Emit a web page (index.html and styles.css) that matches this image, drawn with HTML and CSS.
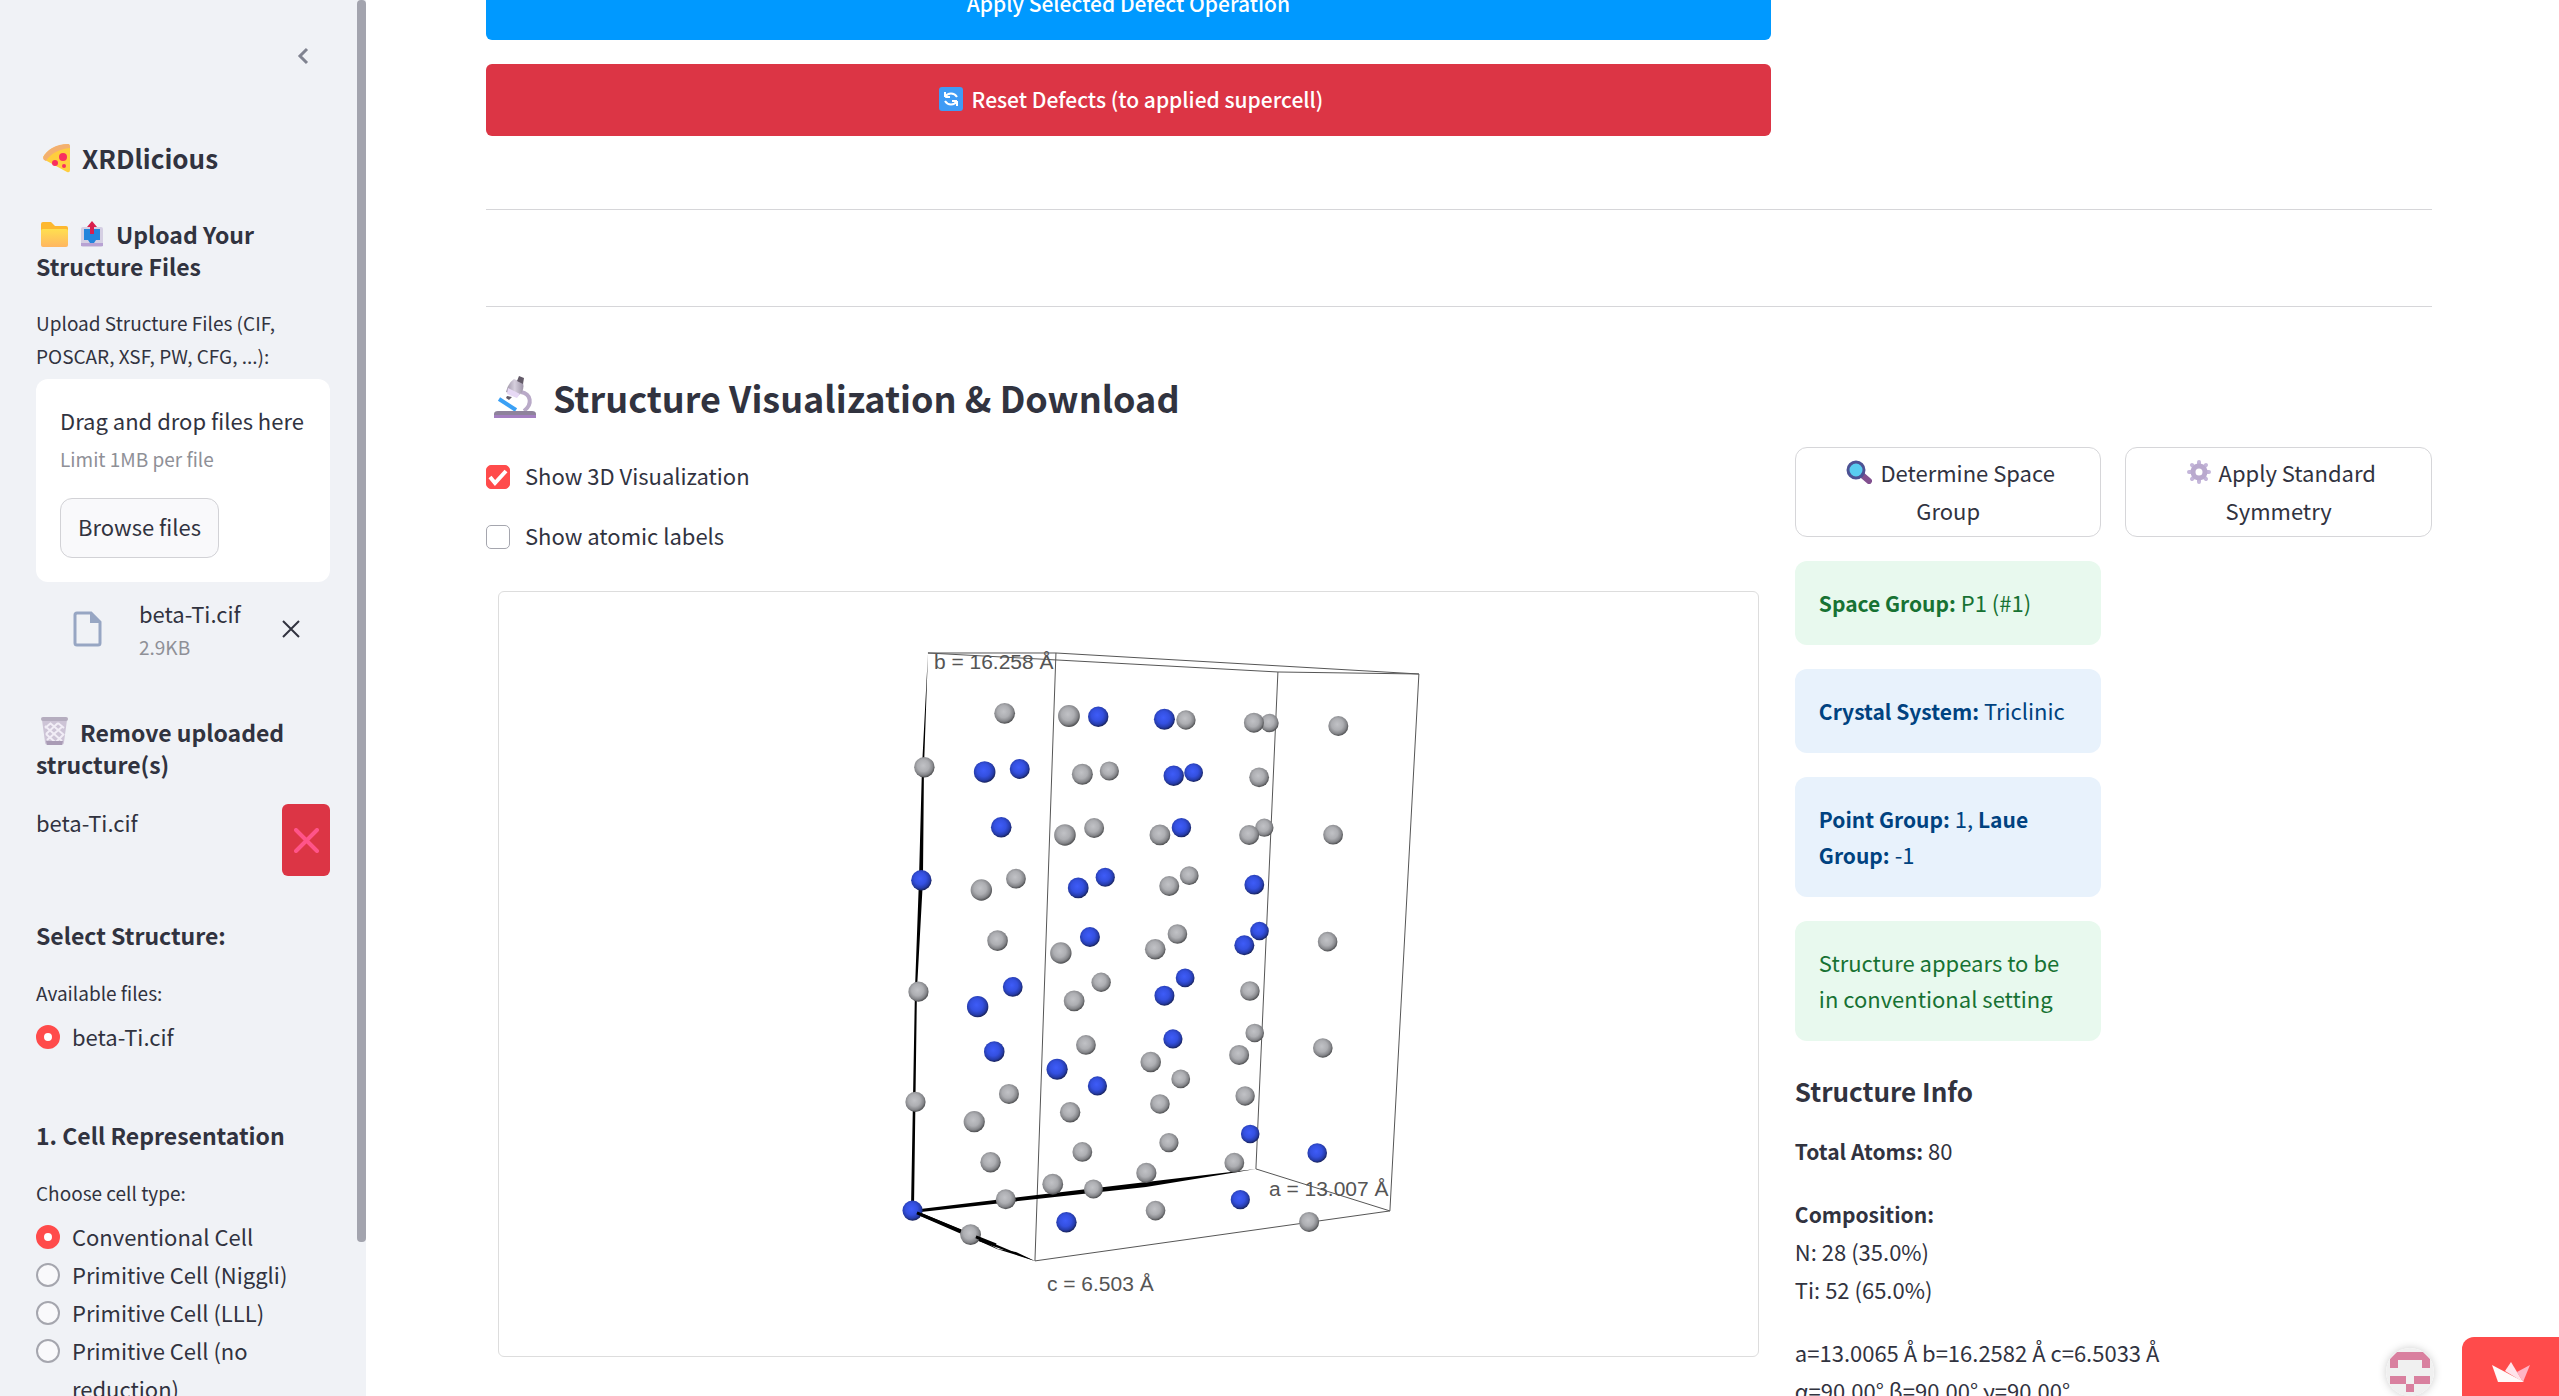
FILE: index.html
```html
<!DOCTYPE html>
<html lang="en">
<head>
<meta charset="utf-8">
<title>XRDlicious</title>
<link rel="stylesheet" href="styles.css">
</head>
<body>
<aside class="sidebar">
  <div class="sidebar-scroll">
    <header class="sidebar-head">
      <button class="icon-button" aria-label="Collapse sidebar"><svg width="12" height="18" viewBox="0 0 12 18"><path d="M10 2 3 9l7 7" fill="none" stroke="#808390" stroke-width="3"/></svg></button>
    </header>
    <h1 class="app-title">
      <svg class="emoji" width="28" height="30" viewBox="0 0 28 30"><path d="M1 14C5 7 14 2 26 1q2 0 2 3v23q0 3-3 2L3 17z" fill="#ffce3e"/><path d="M1 15C4 7 14 1 26 1q2 0 2 4C17 6 8 11 4 18q-3-1-3-3z" fill="#f3b070"/><circle cx="21" cy="14" r="4" fill="#f92f60"/><circle cx="13" cy="20" r="3" fill="#f92f60"/><circle cx="22" cy="23" r="2" fill="#f92f60"/></svg>
      XRDlicious</h1>

    <h2 class="side-heading"><svg class="emoji" width="27" height="25" viewBox="0 0 27 25"><defs><linearGradient id="folder" x2="0" y2="1"><stop stop-color="#ffdf4f"/><stop offset="1" stop-color="#ffb661"/></linearGradient></defs><path d="M0 2q0-2 2-2h8l4 4h11q2 0 2 2v4H0z" fill="#fdb82f"/><rect y="7" width="27" height="18" rx="2" fill="url(#folder)"/></svg><svg class="emoji emoji-outbox" width="22" height="26" viewBox="0 0 22 26"><path d="M0 8q0-2 2-2h18q2 0 2 2v16q0 2-2 2H2q-2 0-2-2z" fill="#d5cfe3"/><path d="M3 8h16v11h-4l-2 3H9l-2-3H3z" fill="#2385dc"/><path d="M0 22h22v3H0z" fill="#b8a2d3"/><path d="M9 13V6H6l5-6 5 6h-3v7z" fill="#d91f4d"/></svg>Upload Your Structure Files</h2>
    <label class="field-label" for="files">Upload Structure Files (CIF, POSCAR, XSF, PW, CFG, ...):</label>
    <section class="dropzone">
      <div class="drop-title">Drag and drop files here</div>
      <div class="drop-limit">Limit 1MB per file</div>
      <button class="browse" id="files">Browse files</button>
    </section>
    <div class="upload">
      <svg width="29" height="36" viewBox="0 0 29 36"><path d="M4 2h14l9 9v21q0 2-2 2H4q-2 0-2-2V4q0-2 2-2z" fill="none" stroke="#97a6c3" stroke-width="3"/><path d="M17 2v10h11z" fill="#97a6c3"/></svg>
      <div class="upload-text"><div class="upload-name">beta-Ti.cif</div><div class="upload-size">2.9KB</div></div>
      <button class="icon-button" aria-label="Remove file"><svg width="18" height="18" viewBox="0 0 18 18"><path d="m1 1 16 16M17 1 1 17" stroke="#31333f" stroke-width="2"/></svg></button>
    </div>

    <h2 class="side-heading heading-remove"><svg class="emoji" width="27" height="28" viewBox="0 0 27 28"><path d="M1 3h25l-3 22q0 3-3 3H7q-3 0-3-3z" fill="#cdc4d6"/><path d="m4 9 17 15M5 17l9 8M9 6l14 12M17 6l6 5M22 9 6 23M23 17l-8 8M17 6 5 17M10 6 4 11" stroke="#f1edf6" stroke-width="2"/><path d="M5 24h17l-1 4H6z" fill="#a99bb5"/><rect width="27" height="4" rx="2" fill="#b5adbf"/></svg>Remove uploaded structure(s)</h2>
    <div class="remove-row">
      <span>beta-Ti.cif</span>
      <button class="remove" aria-label="Remove beta-Ti.cif"><svg width="25" height="25" viewBox="0 0 25 25"><path d="m2 2 21 21M23 2 2 23" stroke="#ff5489" stroke-width="4" stroke-linecap="round"/></svg></button>
    </div>

    <h2 class="side-heading heading-select">Select Structure:</h2>
    <fieldset class="radios">
      <legend class="field-label">Available files:</legend>
      <label class="radio"><input type="radio" name="file" checked><span>beta-Ti.cif</span></label>
    </fieldset>

    <h2 class="side-heading heading-cell">1. Cell Representation</h2>
    <fieldset class="radios">
      <legend class="field-label">Choose cell type:</legend>
      <label class="radio"><input type="radio" name="cell" checked><span>Conventional Cell</span></label>
      <label class="radio"><input type="radio" name="cell"><span>Primitive Cell (Niggli)</span></label>
      <label class="radio"><input type="radio" name="cell"><span>Primitive Cell (LLL)</span></label>
      <label class="radio"><input type="radio" name="cell"><span>Primitive Cell (no reduction)</span></label>
    </fieldset>
  </div>
  <div class="thumb"></div>
</aside>

<main class="main">
  <div class="columns">
    <div class="actions">
      <button class="wide wide-blue">Apply Selected Defect Operation</button>
      <button class="wide wide-red"><svg width="24" height="24" viewBox="0 0 24 24"><rect width="24" height="24" rx="3" fill="#3f9bf5"/><path d="M6 10V5m0 5h5M6 10a7 7 0 0 1 12 0M18 14v5m0-5h-5m5 0a7 7 0 0 1-12 0" fill="none" stroke="#fff" stroke-width="2"/></svg>Reset Defects (to applied supercell)</button>
    </div>
  </div>
  <hr class="rule rule-first">
  <hr class="rule">
  <h2 class="page-heading"><svg width="42" height="42" viewBox="0 0 42 42"><defs><linearGradient id="tube"><stop stop-color="#9c93a6"/><stop offset=".5" stop-color="#d6cfdd"/><stop offset="1" stop-color="#9e95a8"/></linearGradient></defs><path d="M27 16c10 2 12 12 3 19" fill="none" stroke="#b9aac8" stroke-width="4"/><path d="m5 23 17 11" stroke="#3aa0f5" stroke-width="4"/><path d="m20 3 9 4q2 8-5 13l-12-4Q14 7 20 3z" fill="url(#tube)"/><path d="m14 12 12 6-3 4-10-4z" fill="#e7d9f5"/><path d="m25 0 5 2-1 6-6-3zM13 20l5 1-3 3-3-2z" fill="#635a68"/><path d="M0 38q0-3 4-3h34q4 0 4 3v4H0z" fill="#8e829b"/><path d="M0 39h42v3H0z" fill="#a37fc0"/></svg>Structure Visualization &amp; Download</h2>

  <div class="columns">
    <section class="visual">
      <label class="check"><input type="checkbox" checked><span>Show 3D Visualization</span></label>
      <label class="check"><input type="checkbox"><span>Show atomic labels</span></label>
      <div class="viewer">
        <svg class="crystal" viewBox="499 593 1259 764" role="img" aria-label="Unit cell">
          <defs>
            <radialGradient id="gray" cx=".45" cy=".42" r=".58"><stop stop-color="#c1c2c6"/><stop offset=".5" stop-color="#adaeb2"/><stop offset=".8" stop-color="#85868a"/><stop offset="1" stop-color="#4d4e50"/></radialGradient>
            <radialGradient id="blue" cx=".45" cy=".42" r=".58"><stop stop-color="#3e5cf8"/><stop offset=".5" stop-color="#3450e0"/><stop offset=".8" stop-color="#263cab"/><stop offset="1" stop-color="#18225a"/></radialGradient>
          </defs>
          <g class="cell-edges">
            <path d="M928 654h128l363 21-141-2zM1056 654l-21 608 355-50 29-537M1278 673l-22 497 134 42"/>
          </g>
          <path d="m928 654-4 115-1 112-6 110-3 221h-3l4-221 4-110 3-112zM912 1211l344-41-110 18-234 26zM912 1210l123 52-62-22-62-27z"/>
          <path d="m970 1238 6 0 22 12 18 3 19 9-38-12z"/>
          <g fill="url(#gray)">
            <circle cx="1269.6" cy="724" r="9.2"/><circle cx="1004.7" cy="714.3" r="10.4"/><circle cx="1069" cy="717" r="10.9"/><circle cx="1186" cy="721" r="9.7"/><circle cx="1254" cy="723.7" r="10"/><circle cx="1338.4" cy="727" r="10"/>
            <circle cx="924.4" cy="768.3" r="10.2"/><circle cx="1082.4" cy="775.3" r="10.5"/><circle cx="1109.4" cy="772" r="9.6"/><circle cx="1259.2" cy="778.3" r="9.9"/>
            <circle cx="1065" cy="836" r="10.8"/><circle cx="1094.2" cy="829" r="10"/><circle cx="1160" cy="836" r="10.4"/><circle cx="1264.4" cy="828.7" r="9.2"/><circle cx="1249.2" cy="836" r="10"/><circle cx="1333.2" cy="835.7" r="9.9"/>
            <circle cx="981.4" cy="891" r="10.7"/><circle cx="1016" cy="879.7" r="9.9"/><circle cx="1169.3" cy="887" r="10"/><circle cx="1189.3" cy="876.7" r="9.4"/>
            <circle cx="997.6" cy="941.7" r="10.3"/><circle cx="1060.9" cy="954" r="10.7"/><circle cx="1155.3" cy="950.3" r="10.3"/><circle cx="1177.5" cy="935" r="9.8"/><circle cx="1327.7" cy="942.7" r="9.8"/>
            <circle cx="918.5" cy="992.7" r="10.1"/><circle cx="1074.2" cy="1002" r="10.4"/><circle cx="1101.2" cy="983.3" r="9.7"/><circle cx="1250" cy="992" r="9.8"/>
            <circle cx="1086" cy="1046" r="9.9"/><circle cx="1150.8" cy="1063" r="10.3"/><circle cx="1180.8" cy="1080" r="9.4"/><circle cx="1239.2" cy="1056" r="10"/><circle cx="1254.8" cy="1034" r="9.3"/><circle cx="1322.9" cy="1049" r="9.8"/>
            <circle cx="915.5" cy="1103" r="10.1"/><circle cx="974.3" cy="1122.7" r="10.6"/><circle cx="1009" cy="1095" r="10"/><circle cx="1070.2" cy="1113.3" r="10.2"/><circle cx="1160" cy="1105" r="9.8"/><circle cx="1245.2" cy="1097" r="9.7"/>
            <circle cx="990.6" cy="1163.3" r="10.2"/><circle cx="1082.4" cy="1153" r="9.9"/><circle cx="1169" cy="1143.7" r="9.6"/><circle cx="1234.4" cy="1163.7" r="9.9"/><circle cx="1146.4" cy="1174" r="10.1"/>
            <circle cx="1052.8" cy="1185.3" r="10.4"/><circle cx="1093.5" cy="1190" r="9.5"/><circle cx="1005.8" cy="1200.3" r="10"/><circle cx="1155.6" cy="1211.7" r="9.8"/><circle cx="970.6" cy="1235.7" r="10.4"/><circle cx="1309.2" cy="1223" r="10"/>
          </g>
          <g fill="url(#blue)">
            <circle cx="1098.3" cy="717.7" r="10.2"/><circle cx="1164.5" cy="720.3" r="10.5"/>
            <circle cx="984.7" cy="773" r="10.8"/><circle cx="1019.8" cy="770" r="10"/><circle cx="1193.7" cy="773.7" r="9.4"/><circle cx="1173.8" cy="776.7" r="10.2"/>
            <circle cx="1001.3" cy="828.3" r="10.3"/><circle cx="1181.5" cy="828.7" r="9.7"/>
            <circle cx="921.4" cy="881.3" r="10.2"/><circle cx="1078.3" cy="889" r="10.4"/><circle cx="1105.3" cy="878.3" r="9.6"/><circle cx="1254.4" cy="885.7" r="9.9"/>
            <circle cx="1090" cy="938" r="10"/><circle cx="1259.6" cy="932" r="9.3"/><circle cx="1244.4" cy="946.3" r="10"/>
            <circle cx="977.7" cy="1007.7" r="10.7"/><circle cx="1012.8" cy="988" r="9.9"/><circle cx="1164.5" cy="996.7" r="10"/><circle cx="1185.2" cy="979" r="9.4"/>
            <circle cx="994.3" cy="1052.7" r="10.3"/><circle cx="1057.2" cy="1070.3" r="10.6"/><circle cx="1097.5" cy="1087" r="9.6"/><circle cx="1173" cy="1040" r="9.6"/>
            <circle cx="1250.3" cy="1135" r="9.3"/><circle cx="1317.3" cy="1154" r="9.8"/><circle cx="1240.4" cy="1200.7" r="9.6"/><circle cx="912.6" cy="1211.7" r="10.1"/><circle cx="1066.5" cy="1223.3" r="10.2"/>
          </g>
          <path d="m917 1214 44 18M976 1238l20 8" stroke="#000" stroke-width="3"/>
          <g class="axis-label"><text x="934" y="670">b = 16.258 Å</text><text x="1269" y="1197">a = 13.007 Å</text><text x="1047" y="1292">c = 6.503 Å</text></g>
        </svg>
      </div>
    </section>

    <section class="info">
      <div class="info-grid">
        <div class="stack">
          <button class="tool"><svg class="tool-icon" width="26" height="24" viewBox="0 0 26 24"><path d="m16 15 7 6" stroke="#82508f" stroke-width="6" stroke-linecap="round"/><circle cx="10" cy="10" r="8" fill="#59cdf0" stroke="#4d5294" stroke-width="3"/></svg>Determine Space Group</button>
          <p class="alert alert-green"><strong>Space Group:</strong> P1 (#1)</p>
          <p class="alert alert-blue"><strong>Crystal System:</strong> Triclinic</p>
          <p class="alert alert-blue"><strong>Point Group:</strong> 1, <strong>Laue Group:</strong> -1</p>
          <p class="alert alert-green">Structure appears to be in conventional setting</p>
        </div>
        <div class="stack">
          <button class="tool"><svg class="tool-icon" width="24" height="24" viewBox="0 0 24 24"><path d="M12 2v20M2 12h20M5 5l14 14M19 5 5 19" stroke="#c4b6da" stroke-width="4" stroke-linecap="round"/><circle cx="12" cy="12" r="6" fill="#fff" stroke="#b9a9ce" stroke-width="5"/></svg>Apply Standard Symmetry</button>
        </div>
      </div>
      <h3 class="info-title">Structure Info</h3>
      <p class="info-text"><strong>Total Atoms:</strong> 80</p>
      <p class="info-text"><strong>Composition:</strong><br>N: 28 (35.0%)<br>Ti: 52 (65.0%)</p>
      <p class="info-text">a=13.0065 Å b=16.2582 Å c=6.5033 Å<br>α=90.00° β=90.00° γ=90.00°</p>
    </section>
  </div>
</main>

<div class="badges">
  <svg class="avatar" width="48" height="48" viewBox="0 0 48 48"><circle cx="24" cy="24" r="24" fill="#f0f0f0"/><path d="M4 20v-9l7-7h26l7 7v9h-8v-8H12v8zM4 28h16v8h8v-8h16v8H28v8h-8v-8H4z" fill="#d9809f"/></svg>
  <a class="hosted" href="#" aria-label="Hosted with Streamlit"><svg width="40" height="22" viewBox="0 0 40 22"><path d="m39 4-7 17-6-10z" fill="#ffb3c4"/><path d="m20 1 12 20-18-11z" fill="#ffe3ea"/><path d="m1 4 32 17H7z" fill="#fffafa"/></svg></a>
</div>
</body>
</html>
```
FILE: styles.css
```css
* { box-sizing: border-box; }
body {
  margin: 0;
  display: flex;
  height: 100vh;
  overflow: hidden;
  background: #fff;
  color: #31333f;
  font: 400 22px/38px "Noto Sans CJK SC", "Noto Sans", sans-serif;
}
h1, h2, h3, p, fieldset { margin: 0; padding: 0; border: 0; }
legend { padding: 0; }
button { font: inherit; color: inherit; cursor: pointer; }
strong, h1, h2, h3 { font-weight: 600; }
strong { font-size: 21px; line-height: 1; }

/* Sidebar */
.sidebar { position: relative; flex: 0 0 366px; background: #f0f2f6; overflow: hidden; }
.sidebar-scroll { padding: 0 36px; }
.thumb { position: absolute; top: 0; right: 0; width: 9px; height: 89%; border-radius: 4px; background: #a3a4ae; }
.sidebar-head { display: flex; justify-content: flex-end; align-items: center; height: 112px; padding-right: 15px; }
.icon-button { display: flex; padding: 6px; border: 0; background: none; }
.app-title { display: flex; align-items: center; margin-top: 28px; font-size: 26px; line-height: 36px; gap: 6px; }
.emoji { margin: 0 6px; vertical-align: -3px; }
.side-heading { margin-top: 42px; font-size: 23px; line-height: 32px; }
.side-heading .emoji { margin: 0 12px 0 5px; }
.side-heading .emoji-outbox { margin: 0 13px 0 1px; }
.field-label { display: block; padding-top: 24px; font-size: 19px; line-height: 33px; }
.dropzone { margin-top: 7px; padding: 22px 24px 24px; border-radius: 12px; background: #fff; }
.drop-title { white-space: nowrap; }
.drop-limit { margin: 3px 0 22px; font-size: 19px; line-height: 34px; color: #8f9097; }
.browse { display: block; height: 60px; padding: 0 17px 4px; border: 1px solid #d2d2d6; border-radius: 12px; background: #f9f9fb; }
.upload { display: flex; align-items: center; margin-top: 13px; padding-left: 37px; padding-right: 24px; }
.upload-text { flex: 1; padding-left: 37px; }
.upload-name { line-height: 36px; }
.upload-size { font-size: 19px; line-height: 32px; color: #8f9097; }
.heading-remove { margin-top: 53px; }
.remove-row { display: flex; justify-content: space-between; align-items: flex-start; margin-top: 24px; }
.remove-row span { line-height: 36px; }
.remove { display: flex; align-items: center; justify-content: center; width: 48px; height: 72px; padding: 0; border: 0; border-radius: 6px; background: #dc3545; }
.heading-select { margin-top: 43px; }
.heading-cell { margin-top: 64px; }
.radios { min-width: 0; }
.radios .field-label { padding-top: 25px; margin-bottom: 8px; }
.radio { display: flex; align-items: flex-start; gap: 12px; }
.radio input { flex: none; appearance: none; width: 24px; height: 24px; margin: 8px 0 0; border: 2px solid #a5a6ae; border-radius: 50%; background: #f9f9fb; }
.radio input:checked { border: 8px solid #ff4b4b; background: #fff; }

/* Main area */
.main { flex: 1; min-width: 0; padding: 0 127px 0 120px; }
.columns { display: grid; grid-template-columns: 121fr 60fr; gap: 24px; }
.actions { display: grid; gap: 24px; margin-top: -32px; }
.wide { display: flex; align-items: center; justify-content: center; gap: 9px; height: 72px; padding: 0 0 3px; border: 0; border-radius: 6px; color: #fff; font-size: 21px; font-weight: 500; }
.wide-blue { background: #0099ff; }
.wide-red { background: #dc3545; }
.wide svg { margin-left: 5px; }
.rule { height: 1px; margin: 96px 0 0; border: 0; background: #d6d6d9; }
.rule-first { margin-top: 73px; }
.page-heading { display: flex; align-items: center; gap: 17px; margin: 65px 0 25px; padding-left: 8px; font-size: 36px; line-height: 50px; }
.visual { display: flex; flex-direction: column; gap: 24px; padding-top: 12px; }
.check { display: flex; align-items: center; gap: 15px; line-height: 36px; }
.check span { padding-bottom: 3px; line-height: 33px; }
.check input { appearance: none; width: 24px; height: 24px; margin: 0; border: 1px solid #a5a6ae; border-radius: 5px; background: #fff; }
.check input:checked { border-color: #ff4b4b; background: #ff4b4b url("data:image/svg+xml,%3Csvg xmlns='http://www.w3.org/2000/svg' viewBox='0 0 22 22'%3E%3Cpath d='m3 11 5 6L19 5' fill='none' stroke='white' stroke-width='4'/%3E%3C/svg%3E"); }
.viewer { margin: 12px 12px 0; border: 1px solid #ddd; border-radius: 6px; overflow: hidden; }
.crystal { display: block; width: 100%; height: auto; }
.cell-edges { fill: none; stroke: #555; stroke-width: 1; }
.axis-label { font: 21px "Liberation Sans", sans-serif; fill: #555; }
.info-grid { display: grid; grid-template-columns: 1fr 1fr; gap: 24px; }
.stack { display: flex; flex-direction: column; gap: 24px; }
.tool { height: 90px; padding: 0 18px 3px; border: 1px solid #d6d6d9; border-radius: 12px; background: #fff; }
.tool-icon { margin: 0 8px 0 5px; vertical-align: -2px; }
.alert { padding: 23px 24px 25px; border-radius: 12px; line-height: 36px; }
.alert-green { background: #e8f9ee; color: #177233; }
.alert-blue { background: #e8f2fc; color: #004280; }
.info-title { margin-top: 32px; font-size: 26px; line-height: 36px; }
.info-text { margin-top: 25px; }
.info-title + .info-text { margin-top: 22px; }

/* Floating badges */
.badges { position: fixed; right: 0; bottom: 0; display: flex; align-items: flex-end; gap: 28px; }
.avatar { border-radius: 50%; box-shadow: 0 0 9px #ccc; }
.hosted { display: flex; align-items: center; justify-content: center; width: 97px; height: 59px; padding-top: 10px; border-radius: 12px 0 0 0; background: #ff4b4b; }
```
